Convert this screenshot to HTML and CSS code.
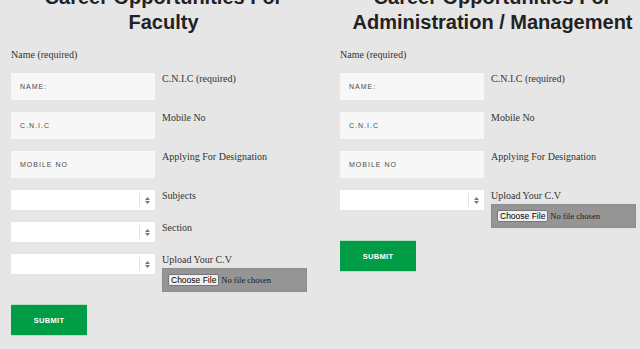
FILE: index.html
```html
<!DOCTYPE html>
<html lang="en">
<head>
<meta charset="utf-8">
<title>Careers</title>
<link rel="stylesheet" href="styles.css">
</head>
<body>
<div class="page">
  <section class="col">
    <h2 class="title">Career Opportunities For<br>Faculty</h2>
    <form class="form">
      <div class="lbl lbl-top">Name (required)</div>
      <div class="row"><input class="field" type="text" placeholder="NAME:"><span class="lbl">C.N.I.C (required)</span></div>
      <div class="row"><input class="field" type="text" placeholder="C.N.I.C"><span class="lbl">Mobile No</span></div>
      <div class="row"><input class="field" type="text" placeholder="MOBILE NO"><span class="lbl">Applying For Designation</span></div>
      <div class="row">
        <div class="select"><span class="sel-val"></span><span class="sel-sep"></span><span class="sel-arrow"><svg width="5" height="7" viewBox="0 0 5 7"><path d="M0 3 2.5 0 5 3Z M0 4 2.5 7 5 4Z" fill="#777"/></svg></span></div>
        <span class="lbl">Subjects</span>
      </div>
      <div class="row">
        <div class="select"><span class="sel-val"></span><span class="sel-sep"></span><span class="sel-arrow"><svg width="5" height="7" viewBox="0 0 5 7"><path d="M0 3 2.5 0 5 3Z M0 4 2.5 7 5 4Z" fill="#777"/></svg></span></div>
        <span class="lbl">Section</span>
      </div>
      <div class="row">
        <div class="select"><span class="sel-val"></span><span class="sel-sep"></span><span class="sel-arrow"><svg width="5" height="7" viewBox="0 0 5 7"><path d="M0 3 2.5 0 5 3Z M0 4 2.5 7 5 4Z" fill="#777"/></svg></span></div>
        <div class="upload">
          <span class="lbl">Upload Your C.V</span>
          <div class="filebox"><button type="button" class="filebtn">Choose File</button><span class="filetxt">No file chosen</span></div>
        </div>
      </div>
      <div class="actions"><button type="button" class="submit">SUBMIT</button></div>
    </form>
  </section>

  <section class="col">
    <h2 class="title">Career Opportunities For<br>Administration / Management</h2>
    <form class="form">
      <div class="lbl lbl-top">Name (required)</div>
      <div class="row"><input class="field" type="text" placeholder="NAME:"><span class="lbl">C.N.I.C (required)</span></div>
      <div class="row"><input class="field" type="text" placeholder="C.N.I.C"><span class="lbl">Mobile No</span></div>
      <div class="row"><input class="field" type="text" placeholder="MOBILE NO"><span class="lbl">Applying For Designation</span></div>
      <div class="row">
        <div class="select"><span class="sel-val"></span><span class="sel-sep"></span><span class="sel-arrow"><svg width="5" height="7" viewBox="0 0 5 7"><path d="M0 3 2.5 0 5 3Z M0 4 2.5 7 5 4Z" fill="#777"/></svg></span></div>
        <div class="upload">
          <span class="lbl">Upload Your C.V</span>
          <div class="filebox"><button type="button" class="filebtn">Choose File</button><span class="filetxt">No file chosen</span></div>
        </div>
      </div>
      <div class="actions"><button type="button" class="submit">SUBMIT</button></div>
    </form>
  </section>
</div>
</body>
</html>
```
FILE: styles.css
```css
html, body {
  margin: 0;
  padding: 0;
  background: #e6e6e6;
  overflow: hidden;
}

.page {
  display: grid;
  grid-template-columns: 305px 305px;
  column-gap: 24px;
  padding-left: 11px;
}

.col {
  min-width: 0;
}

.title {
  margin: -15px 0 0;
  font: 700 20px/25px "Liberation Sans", Arial, sans-serif;
  color: #222;
  text-align: center;
}

.form {
  margin-top: 14px;
  display: flex;
  flex-direction: column;
  gap: 12px;
}

.lbl {
  font: 10px/12px "Liberation Serif", "Times New Roman", serif;
  color: #333;
  display: block;
}

.row {
  display: flex;
  align-items: flex-start;
  gap: 7px;
}

.field {
  width: 144px;
  height: 27px;
  box-sizing: border-box;
  border: none;
  margin: 0;
  padding: 0 9px;
  background: #f7f7f7;
  font: 7px "Liberation Sans", Arial, sans-serif;
  letter-spacing: 1px;
  color: #444;
  outline: none;
  flex: none;
}

.field::placeholder {
  color: #4a4a4a;
}

.select {
  width: 144px;
  height: 20px;
  box-sizing: border-box;
  background: #fff;
  display: flex;
  align-items: center;
  flex: none;
}

.sel-val {
  flex: 1;
}

.sel-sep {
  width: 1px;
  align-self: stretch;
  margin: 3px 0;
  background: #e2e2e2;
}

.sel-arrow {
  width: 15px;
  display: flex;
  justify-content: center;
  align-items: center;
}

.sel-arrow svg {
  display: block;
}

.upload {
  display: flex;
  flex-direction: column;
  gap: 2px;
}

.filebox {
  width: 145px;
  height: 24px;
  box-sizing: border-box;
  background: #959595;
  border: 1px solid #8d8d8d;
  padding: 0 5px;
  display: flex;
  align-items: center;
}

.filebtn {
  height: 12px;
  margin: 0;
  padding: 0 2px;
  border: 1px solid #767676;
  border-radius: 2px;
  background: #efefef;
  color: #000;
  font: 8.5px/10px "Liberation Sans", Arial, sans-serif;
  box-sizing: border-box;
}

.filetxt {
  margin-left: 2px;
  font: 8.5px/10px "Liberation Serif", "Times New Roman", serif;
  color: #1a1a1a;
}

.actions {
  display: flex;
}

.submit {
  width: 76px;
  height: 32px;
  margin: 0;
  padding: 0;
  border: none;
  border-top: 1px solid #b9dcc4;
  border-bottom: 1px solid #b9dcc4;
  background: #009d46;
  color: #fff;
  font: 700 7.5px "Liberation Sans", Arial, sans-serif;
  letter-spacing: 0.3px;
  box-sizing: border-box;
}
```
